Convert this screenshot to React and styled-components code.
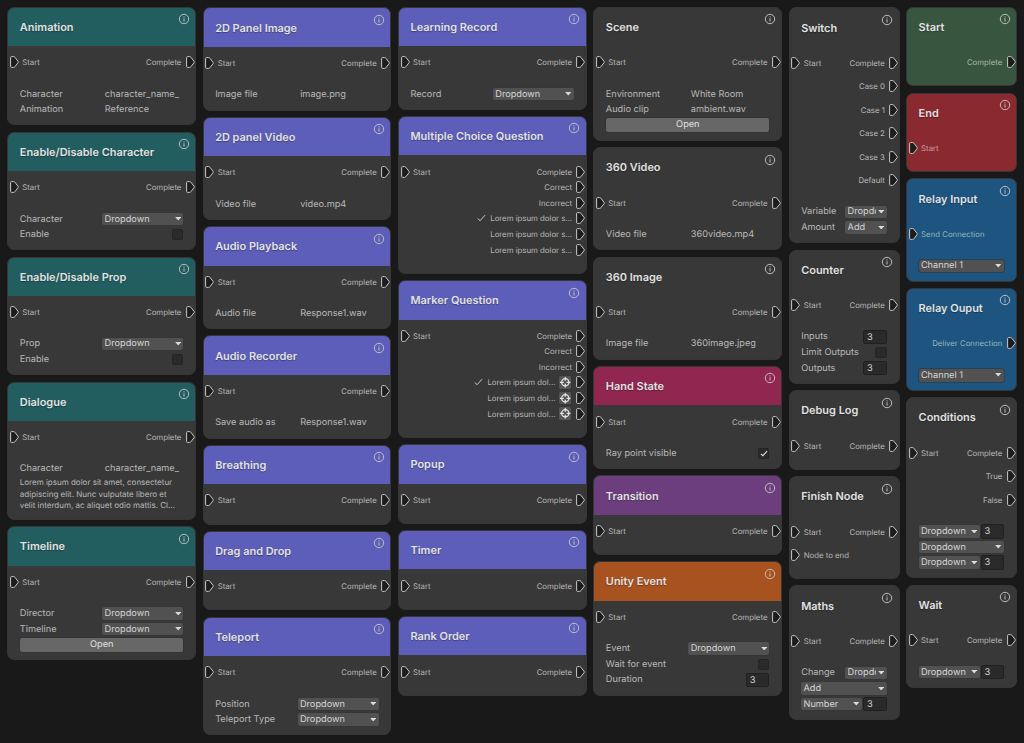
import React from 'react';
import styled, { createGlobalStyle } from 'styled-components';

const App = () => {
    return (
        <>
            <GlobalStyle />
            <Board>
                {columns.map((column, index) => (
                    <Column key={index} $narrow={column.narrow} $top={column.top}>
                        {column.nodes.map((node) => <Node key={node.title} {...node} />)}
                    </Column>
                ))}
            </Board>
        </>
    )
}

export default App;

const Node = ({ title, units, header, fill, tint, inputs = ['Start'], outputs = ['Complete'], spaced, children }) => (
    <Card $units={units} $fill={fill}>
        <Header $color={header}>
            <Title>{title}</Title>
            <InfoIcon />
        </Header>
        <Ports>
            <PortColumn $spaced={spaced}>
                {inputs.map((label) => (
                    <Port key={label} $tint={tint}><PortIcon />{label}</Port>
                ))}
            </PortColumn>
            <PortColumn $spaced={spaced} $right>
                {outputs.map((output, index) => {
                    const { label, checked, target } = typeof output === 'string' ? { label: output } : output;
                    return (
                        <Port key={index} $tint={tint} $right>
                            {checked && <PortCheck />}
                            {label}
                            {target && <Target><TargetIcon /></Target>}
                            <PortIcon />
                        </Port>
                    )
                })}
            </PortColumn>
        </Ports>
        <Fields>{children}</Fields>
    </Card>
)

const InfoIcon = () => (
    <Info viewBox="0 0 12 12">
        <circle cx="6" cy="6" r="4.7" />
        <path d="M6 5.3v3.2M6 3.4v1" />
    </Info>
)

const PortIcon = () => (
    <PortShape viewBox="0 0 9 12">
        <path d="M.6 1.6q0-1 1-1h2.1q.7 0 1.1.6l3.3 4.2q.4.6 0 1.2l-3.3 4.2q-.4.6-1.1.6H1.6q-1 0-1-1z" />
    </PortShape>
)

const PortCheck = () => (
    <Check viewBox="0 0 9 8"><path d="M.7 4.5l2.4 2.2 5-5.6" /></Check>
)

const TargetIcon = () => (
    <TargetShape viewBox="0 0 12 12">
        <circle cx="6" cy="6" r="3.5" />
        <path d="M6 1v3.6M6 7.4V11M1 6h3.6M7.4 6H11" />
    </TargetShape>
)

const Dropdown = ({ children = 'Dropdown', size, outlined }) => (
    <Select $size={size} $outlined={outlined}>
        <SelectText>{children}</SelectText>
        <Caret viewBox="0 0 7 4"><path d="M0 0h7L3.5 4z" /></Caret>
    </Select>
)

const Field = ({ label, children }) => (
    <Row><Label>{label}</Label>{children}</Row>
)

const TextField = ({ label, value }) => (
    <Field label={label}><Value>{value}</Value></Field>
)

const Checkbox = ({ checked }) => (
    <Box>{checked && <BoxCheck viewBox="0 0 9 8"><path d="M1 4.3l2.3 2.2L8 1.3" /></BoxCheck>}</Box>
)

const GlobalStyle = createGlobalStyle`
    * {
        box-sizing: border-box;
    }

    body {
        margin: 0;
        background: #191919;
        font-family: Inter, "Liberation Sans", sans-serif;
        text-rendering: geometricPrecision;
        overflow: hidden;
    }
`;

const Board = styled.main`
    display: flex;
    align-items: flex-start;
    width: 1024px;
    height: 743px;
    padding-left: 7.3px;
    background: #191919;
    overflow: hidden;
`;

const Column = styled.section`
    flex: none;
    display: flex;
    flex-direction: column;
    gap: 6.2px;
    width: ${props => props.$narrow ? '110.9px' : '188.8px'};
    margin-right: 6.55px;
    padding-top: ${props => props.$top}px;
`;

const Card = styled.article`
    flex: none;
    height: ${props => props.$units * 0.78125 - 6.2}px;
    background: ${props => props.$fill || '#383838'};
    border: 1px solid #363636;
    border-radius: 7px;
    overflow: hidden;
`;

const Header = styled.header`
    display: flex;
    justify-content: space-between;
    align-items: center;
    height: 38.5px;
    padding: 0 5.5px 0 11.5px;
    background: ${props => props.$color || 'transparent'};
`;

const Title = styled.h2`
    margin: 0;
    font-size: 10.94px;
    font-weight: 600;
    line-height: 16px;
    white-space: nowrap;
    color: #e2e2e2;
    text-shadow: 0 1px 1px rgba(0, 0, 0, .35);
`;

const Info = styled.svg`
    align-self: flex-start;
    width: 12px;
    height: 12px;
    margin-top: 5.5px;
    fill: none;
    stroke: #c4c4c4;
    stroke-width: 0.95;
`;

const Ports = styled.div`
    display: flex;
    justify-content: space-between;
    padding: 8.3px 0.5px 16.2px 1.8px;
`;

const PortColumn = styled.div`
    display: flex;
    flex-direction: column;
    align-items: ${props => props.$right ? 'flex-end' : 'flex-start'};
    gap: ${props => props.$spaced ? '7.8px' : '0'};
`;

const Port = styled.div`
    display: flex;
    align-items: center;
    gap: ${props => props.$right ? '4.2px' : '3.2px'};
    height: 15.63px;
    font-size: 7.8px;
    white-space: nowrap;
    color: ${props => props.$tint || '#b9b9b9'};
`;

const PortShape = styled.svg`
    width: 9px;
    height: 12px;
    fill: #1d1d1d;
    stroke: #c8c8c8;
`;

const Check = styled.svg`
    width: 9px;
    height: 8px;
    fill: none;
    stroke: #c8c8c8;
`;

const Target = styled.span`
    display: flex;
    width: 12.5px;
    height: 12.5px;
    margin: 0 1px 0 -1px;
    border-radius: 1.5px;
    background: #555;
`;

const TargetShape = styled.svg`
    width: 12.5px;
    height: 12.5px;
    fill: none;
    stroke: #e6e6e6;
    stroke-width: 1.2;
`;

const Fields = styled.div`
    padding: 0 11.8px 0 11.5px;
`;

const Row = styled.div`
    display: flex;
    justify-content: space-between;
    align-items: center;
    height: 15.63px;
`;

const Label = styled.span`
    font-size: 9.2px;
    white-space: nowrap;
    color: #b9b9b9;
`;

const Value = styled(Label)`
    width: 78.5px;
`;

const Select = styled.div`
    display: flex;
    align-items: center;
    justify-content: space-between;
    gap: 2px;
    width: ${props => props.$size || '81px'};
    height: 12.6px;
    padding: 0 2.3px;
    border-radius: 2px;
    background: #515151;
    box-shadow: 0 0 0 0.5px ${props => props.$outlined ? '#303030' : '#343434'};
    color: #d6d6d6;
`;

const SelectText = styled.span`
    min-width: 0;
    overflow: hidden;
    font-size: 9.2px;
    line-height: 13px;
    white-space: nowrap;
`;

const Caret = styled.svg`
    flex: none;
    width: 6.5px;
    height: 3.5px;
    fill: #dcdcdc;
`;

const Box = styled.span`
    display: flex;
    align-items: center;
    justify-content: center;
    width: 11.5px;
    height: 11.5px;
    background: #2a2a2a;
    border: 1px solid #242424;
    border-radius: 2px;
`;

const BoxCheck = styled.svg`
    width: 8px;
    height: 7px;
    fill: none;
    stroke: #e0e0e0;
    stroke-width: 1.2;
`;

const NumberInput = styled.span`
    width: 23.7px;
    height: 14.5px;
    padding-left: 3px;
    background: #2a2a2a;
    border: 1px solid #202020;
    border-radius: 2px;
    font-size: 9.3px;
    line-height: 13px;
    color: #d0d0d0;
`;

const OpenButton = styled.div`
    height: 14px;
    margin: 0.8px 0 0 0.5px;
    border-radius: 2px;
    background: #676767;
    box-shadow: 0 0 0 0.5px #303030;
    font-size: 9.2px;
    line-height: 14px;
    text-align: center;
    color: #e2e2e2;
`;

const Paragraph = styled.p`
    margin: 0.2px 0 0;
    font-size: 8px;
    line-height: 11.72px;
    white-space: pre;
    color: #b9b9b9;
`;

const TEAL = '#225d60';
const INDIGO = '#5c5eb9';
const RELAY_BLUE = '#1e5480';
const LOREM = 'Lorem ipsum dolor s...';
const SHORT_LOREM = 'Lorem ipsum dol...';

const columns = [
    {
        top: 6.6,
        nodes: [
            {
                title: 'Animation', units: 160, header: TEAL,
                children: <><TextField label="Character" value="character_name_" /><TextField label="Animation" value="Reference" /></>
            },
            {
                title: 'Enable/Disable Character', units: 160, header: TEAL,
                children: <><Field label="Character"><Dropdown /></Field><Field label="Enable"><Checkbox /></Field></>
            },
            {
                title: 'Enable/Disable Prop', units: 160, header: TEAL,
                children: <><Field label="Prop"><Dropdown /></Field><Field label="Enable"><Checkbox /></Field></>
            },
            {
                title: 'Dialogue', units: 185, header: TEAL,
                children: (
                    <>
                        <TextField label="Character" value="character_name_" />
                        <Paragraph>{'Lorem ipsum dolor sit amet, consectetur\nadipiscing elit. Nunc vulputate libero et\nvelit interdum, ac aliquet odio mattis. Cl...'}</Paragraph>
                    </>
                )
            },
            {
                title: 'Timeline', units: 180, header: TEAL,
                children: <><Field label="Director"><Dropdown /></Field><Field label="Timeline"><Dropdown /></Field><OpenButton>Open</OpenButton></>
            },
        ]
    },
    {
        top: 7.4,
        nodes: [
            { title: '2D Panel Image', units: 140, header: INDIGO, children: <TextField label="Image file" value="image.png" /> },
            { title: '2D panel Video', units: 140, header: INDIGO, children: <TextField label="Video file" value="video.mp4" /> },
            { title: 'Audio Playback', units: 140, header: INDIGO, children: <TextField label="Audio file" value="Response1.wav" /> },
            { title: 'Audio Recorder', units: 140, header: INDIGO, children: <TextField label="Save audio as" value="Response1.wav" /> },
            { title: 'Breathing', units: 110, header: INDIGO },
            { title: 'Drag and Drop', units: 110, header: INDIGO },
            {
                title: 'Teleport', units: 160, header: INDIGO,
                children: <><Field label="Position"><Dropdown /></Field><Field label="Teleport Type"><Dropdown /></Field></>
            },
        ]
    },
    {
        top: 6.6,
        nodes: [
            { title: 'Learning Record', units: 140, header: INDIGO, children: <Field label="Record"><Dropdown /></Field> },
            {
                title: 'Multiple Choice Question', units: 210, header: INDIGO,
                outputs: ['Complete', 'Correct', 'Incorrect', { label: LOREM, checked: true }, LOREM, LOREM]
            },
            {
                title: 'Marker Question', units: 210, header: INDIGO,
                outputs: [
                    'Complete', 'Correct', 'Incorrect',
                    { label: SHORT_LOREM, checked: true, target: true },
                    { label: SHORT_LOREM, target: true },
                    { label: SHORT_LOREM, target: true },
                ]
            },
            { title: 'Popup', units: 110, header: INDIGO },
            { title: 'Timer', units: 110, header: INDIGO },
            { title: 'Rank Order', units: 110, header: INDIGO },
        ]
    },
    {
        top: 6.6,
        nodes: [
            {
                title: 'Scene', units: 180,
                children: <><TextField label="Environment" value="White Room" /><TextField label="Audio clip" value="ambient.wav" /><OpenButton>Open</OpenButton></>
            },
            { title: '360 Video', units: 140, children: <TextField label="Video file" value="360video.mp4" /> },
            { title: '360 Image', units: 140, children: <TextField label="Image file" value="360image.jpeg" /> },
            { title: 'Hand State', units: 140, header: '#912751', children: <Field label="Ray point visible"><Checkbox checked /></Field> },
            { title: 'Transition', units: 110, header: '#6d3e7e' },
            {
                title: 'Unity Event', units: 180, header: '#a85220',
                children: (
                    <>
                        <Field label="Event"><Dropdown /></Field>
                        <Field label="Wait for event"><Checkbox /></Field>
                        <Field label="Duration"><NumberInput>3</NumberInput></Field>
                    </>
                )
            },
        ]
    },
    {
        top: 7.4,
        narrow: true,
        nodes: [
            {
                title: 'Switch', units: 310, spaced: true,
                outputs: ['Complete', 'Case 0', 'Case 1', 'Case 2', 'Case 3', 'Default'],
                children: <><Field label="Variable"><Dropdown size="41.5px" /></Field><Field label="Amount"><Dropdown size="41.5px">Add</Dropdown></Field></>
            },
            {
                title: 'Counter', units: 180,
                children: (
                    <>
                        <Field label="Inputs"><NumberInput>3</NumberInput></Field>
                        <Field label="Limit Outputs"><Checkbox /></Field>
                        <Field label="Outputs"><NumberInput>3</NumberInput></Field>
                    </>
                )
            },
            { title: 'Debug Log', units: 110 },
            { title: 'Finish Node', units: 140, spaced: true, inputs: ['Start', 'Node to end'] },
            {
                title: 'Maths', units: 180,
                children: (
                    <>
                        <Field label="Change"><Dropdown size="41.5px" /></Field>
                        <Row><Dropdown size="100%">Add</Dropdown></Row>
                        <Row><Dropdown size="61px">Number</Dropdown><NumberInput>3</NumberInput></Row>
                    </>
                )
            },
        ]
    },
    {
        top: 6.6,
        narrow: true,
        nodes: [
            { title: 'Start', units: 110, fill: '#38563f', tint: '#a9b8a9', inputs: [] },
            { title: 'End', units: 110, fill: '#8b2930', tint: '#cf9da0', outputs: [] },
            {
                title: 'Relay Input', units: 140, fill: RELAY_BLUE, tint: '#93b8bb', inputs: ['Send Connection'], outputs: [],
                children: <Row><Dropdown size="100%" outlined>Channel 1</Dropdown></Row>
            },
            {
                title: 'Relay Ouput', units: 140, fill: RELAY_BLUE, tint: '#93b8bb', inputs: [], outputs: ['Deliver Connection'],
                children: <Row><Dropdown size="100%" outlined>Channel 1</Dropdown></Row>
            },
            {
                title: 'Conditions', units: 240, spaced: true, outputs: ['Complete', 'True', 'False'],
                children: (
                    <>
                        <Row><Dropdown size="61px" /><NumberInput>3</NumberInput></Row>
                        <Row><Dropdown size="100%" /></Row>
                        <Row><Dropdown size="61px" /><NumberInput>3</NumberInput></Row>
                    </>
                )
            },
            { title: 'Wait', units: 140, children: <Row><Dropdown size="61px" /><NumberInput>3</NumberInput></Row> },
        ]
    },
];
